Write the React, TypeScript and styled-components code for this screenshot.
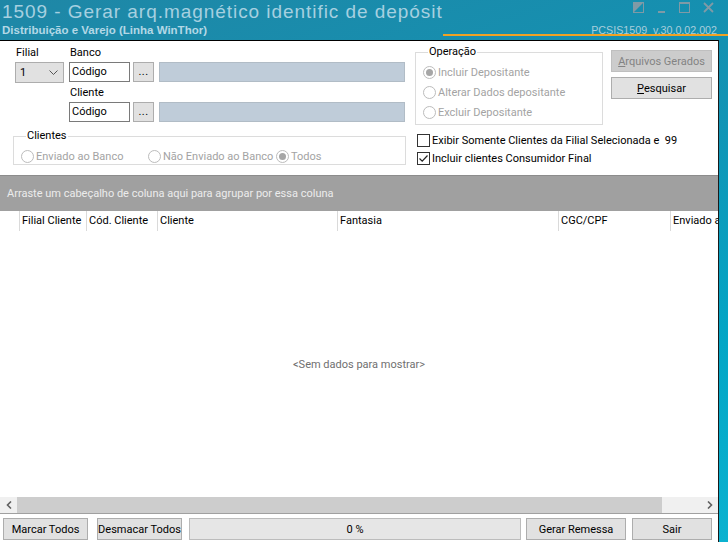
import styled, { createGlobalStyle } from "styled-components";

const GlobalStyle = createGlobalStyle`
  html, body {
    margin: 0;
    padding: 0;
  }
  body {
    font-family: Roboto, "Liberation Sans", sans-serif;
    font-size: 11px;
    color: #000;
  }
`;

const Window = styled.div`
  width: 728px;
  height: 542px;
  display: flex;
  flex-direction: column;
  overflow: hidden;
  background: linear-gradient(160deg, #1f87a6 0%, #1293b4 45%, #03a6c6 75%, #0bb2d0 100%);
`;

const TitleBar = styled.header`
  height: 40px;
  display: flex;
  justify-content: space-between;
  flex-shrink: 0;
  font-family: "Liberation Sans", Arial, sans-serif;
`;

const TitleText = styled.div`
  display: flex;
  flex-direction: column;
  padding: 1px 0 0 2px;
  white-space: nowrap;
`;

const Caption = styled.div`
  font-size: 19px;
  line-height: 22px;
  letter-spacing: 0.95px;
  color: #a6d0e0;
`;

const SubCaption = styled.div`
  font-size: 11.5px;
  line-height: 13px;
  font-weight: bold;
  color: #b3d8e6;
  margin-top: 1px;
`;

const TitleRight = styled.div`
  width: 335px;
  height: 36px;
  border-bottom: 2px solid #f0a224;
  display: flex;
  flex-direction: column;
  align-items: flex-end;
  padding-right: 11px;
  box-sizing: border-box;
`;

const WinButtons = styled.div`
  display: flex;
  gap: 13px;
  margin-top: 2px;
  margin-right: 3px;
  height: 11px;
`;

const Version = styled.div`
  margin-top: 12px;
  font-size: 10.7px;
  line-height: 11px;
  color: #a9cedc;
  white-space: pre;
`;

const Panel = styled.main`
  flex: 1;
  margin-right: 9px;
  background: #fff;
  border-top: 1px solid #000;
  border-right: 1px solid #1a1a1a;
  display: flex;
  flex-direction: column;
  min-height: 0;
`;

const FormArea = styled.section`
  height: 134px;
  display: flex;
  padding: 4px 0 0 13px;
  box-sizing: border-box;
  flex-shrink: 0;
`;

const LeftCol = styled.div`
  width: 393px;
  display: flex;
  flex-direction: column;
`;

const TopFields = styled.div`
  display: flex;
  gap: 5px;
  padding-left: 2px;
`;

const FieldBlock = styled.div<{ $grow?: boolean }>`
  display: flex;
  flex-direction: column;
  flex: ${(p) => (p.$grow ? 1 : "none")};
`;

const Label = styled.div<{ $gap?: number }>`
  line-height: 16px;
  margin-top: ${(p) => p.$gap ?? 0}px;
  margin-bottom: 1px;
  padding-left: 1px;
`;

const Select = styled.div`
  width: 49px;
  height: 21px;
  box-sizing: border-box;
  background: #e1e1e1;
  border: 1px solid #adadad;
  display: flex;
  align-items: center;
  justify-content: space-between;
  padding: 0 5px 0 4px;
`;

const FieldRow = styled.div`
  display: flex;
  gap: 3px;
  height: 20px;
  padding-right: 1px;
`;

const TextInput = styled.div`
  width: 61px;
  box-sizing: border-box;
  border: 1px solid #7a7a7a;
  background: #fff;
  padding-left: 2px;
  line-height: 18px;
`;

const DotsButton = styled.div`
  width: 21px;
  box-sizing: border-box;
  background: #e1e1e1;
  border: 1px solid #adadad;
  text-align: center;
  line-height: 18px;
  letter-spacing: 0.5px;
`;

const ReadOnly = styled.div`
  flex: 1;
  margin-left: 2px;
  background: #bfccd9;
  border: 1px solid #b1bcc6;
`;

const GroupBox = styled.fieldset<{ $width?: number }>`
  margin: 0;
  padding: 0 6px 0 7px;
  border: 1px solid #dcdcdc;
  border-radius: 0;
  min-width: 0;
  width: ${(p) => (p.$width ? `${p.$width}px` : "auto")};
  box-sizing: border-box;
`;

const Legend = styled.legend`
  padding: 0 1px;
  margin-left: 5px;
  line-height: 14px;
  font-size: 11px;
`;

const ClientesBox = styled(GroupBox)`
  margin-top: 7px;
  height: 36px;
  display: flex;
  padding-top: 3px;
`;

const RadioRow = styled.div`
  display: flex;
  align-items: center;
`;

const RadioItem = styled.label<{ $width?: number }>`
  display: flex;
  align-items: center;
  gap: 2px;
  color: #a3a3a3;
  height: 20px;
  white-space: nowrap;
  width: ${(p) => (p.$width ? `${p.$width}px` : "auto")};
`;

const RadioDot = styled.span<{ $checked?: boolean }>`
  width: 13px;
  height: 13px;
  flex-shrink: 0;
  border-radius: 50%;
  border: 1px solid #bcbcbc;
  box-sizing: border-box;
  background: #fff;
  display: flex;
  align-items: center;
  justify-content: center;
  &::after {
    content: "";
    width: 7px;
    height: 7px;
    border-radius: 50%;
    background: ${(p) => (p.$checked ? "#a6a6a6" : "transparent")};
  }
`;

const RightArea = styled.div`
  margin-left: 9px;
  display: flex;
  flex-direction: column;
`;

const OpRow = styled.div`
  display: flex;
  gap: 8px;
`;

const OperacaoBox = styled(GroupBox)`
  height: 80px;
  padding: 3px 6px 0 7px;
  display: flex;
  flex-direction: column;
`;

const ButtonCol = styled.div`
  display: flex;
  flex-direction: column;
  gap: 5px;
  padding-top: 5px;
`;

const Button = styled.button<{ $width: number; $disabled?: boolean }>`
  width: ${(p) => p.$width}px;
  height: 22px;
  flex-shrink: 0;
  box-sizing: border-box;
  padding: 0;
  font: inherit;
  font-size: 11px;
  white-space: nowrap;
  background: ${(p) => (p.$disabled ? "#cccccc" : "#e1e1e1")};
  border: 1px solid ${(p) => (p.$disabled ? "#bfbfbf" : "#adadad")};
  color: ${(p) => (p.$disabled ? "#838383" : "#000")};
  u {
    text-decoration: underline;
  }
`;

const CheckList = styled.div`
  display: flex;
  flex-direction: column;
  gap: 5px;
  margin-top: 9px;
  padding-left: 2px;
`;

const CheckItem = styled.label`
  display: flex;
  align-items: center;
  gap: 2px;
  height: 13px;
  white-space: pre;
`;

const CheckBox = styled.span`
  width: 13px;
  height: 13px;
  box-sizing: border-box;
  border: 1px solid #333;
  background: #fff;
  display: flex;
  align-items: center;
  justify-content: center;
`;

const GroupPanel = styled.div`
  height: 36px;
  flex-shrink: 0;
  background: #a0a0a0;
  border-top: 1px solid #8c8c8c;
  box-sizing: border-box;
  color: #ececec;
  display: flex;
  align-items: center;
  padding-left: 7px;
`;

const HeaderRow = styled.div`
  height: 20px;
  flex-shrink: 0;
  display: flex;
  overflow: hidden;
`;

const HeaderCell = styled.div<{ $width: number }>`
  width: ${(p) => p.$width}px;
  flex-shrink: 0;
  box-sizing: border-box;
  border-right: 1px solid #dadada;
  padding-left: 2px;
  line-height: 20px;
  white-space: nowrap;
  overflow: hidden;
`;

const GridBody = styled.div`
  flex: 1;
  display: flex;
  align-items: center;
  justify-content: center;
  color: #6f6f6f;
`;

const ScrollBar = styled.div`
  height: 17px;
  flex-shrink: 0;
  display: flex;
  background: #f0f0f0;
  border-bottom: 1px solid #a0a0a0;
  box-sizing: border-box;
`;

const ScrollArrow = styled.div`
  width: 17px;
  display: flex;
  align-items: center;
  justify-content: center;
`;

const ScrollThumb = styled.div<{ $width: number }>`
  width: ${(p) => p.$width}px;
  background: #cdcdcd;
`;

const ScrollTrack = styled.div`
  flex: 1;
`;

const Footer = styled.footer`
  height: 28px;
  flex-shrink: 0;
  display: flex;
  align-items: flex-start;
  padding: 4px 0 0 3px;
  box-sizing: border-box;
  gap: 0;
`;

const Progress = styled.div`
  width: 332px;
  height: 22px;
  box-sizing: border-box;
  background: #e6e6e6;
  border: 1px solid #bcbcbc;
  display: flex;
  align-items: center;
  justify-content: center;
  margin: 0 5px 0 7px;
`;

const columns = [
  { title: "", width: 20 },
  { title: "Filial Cliente", width: 67 },
  { title: "Cód. Cliente", width: 71 },
  { title: "Cliente", width: 180 },
  { title: "Fantasia", width: 221 },
  { title: "CGC/CPF", width: 112 },
  { title: "Enviado ao Banco", width: 100 },
];

const iconColor = "#7f9aa6";

function Radio({ label, checked, width }: { label: string; checked?: boolean; width?: number }) {
  return (
    <RadioItem $width={width}>
      <RadioDot $checked={checked} />
      {label}
    </RadioItem>
  );
}

function Check({ label, checked }: { label: string; checked?: boolean }) {
  return (
    <CheckItem>
      <CheckBox>
        {checked && (
          <svg width="11" height="11" viewBox="0 0 11 11">
            <path d="M1.5 5.5 L4.2 8.2 L9.5 2.5" fill="none" stroke="#222" strokeWidth="1.2" />
          </svg>
        )}
      </CheckBox>
      {label}
    </CheckItem>
  );
}

export default function App() {
  return (
    <>
      <GlobalStyle />
      <Window>
        <TitleBar>
          <TitleText>
            <Caption>1509 - Gerar arq.magnético identific de depósit</Caption>
            <SubCaption>Distribuição e Varejo (Linha WinThor)</SubCaption>
          </TitleText>
          <TitleRight>
            <WinButtons>
              <svg width="11" height="11" viewBox="0 0 11 11">
                <rect x="0.5" y="0.5" width="10" height="10" fill="none" stroke={iconColor} />
                <path d="M0 0 H11 L0 11 Z" fill={iconColor} />
              </svg>
              <svg width="9" height="11" viewBox="0 0 9 11">
                <rect x="1" y="9" width="7" height="2" fill={iconColor} />
              </svg>
              <svg width="11" height="11" viewBox="0 0 11 11">
                <rect x="0.5" y="0.5" width="10" height="10" fill="none" stroke={iconColor} />
                <rect x="0" y="0" width="11" height="2" fill={iconColor} />
              </svg>
              <svg width="11" height="11" viewBox="0 0 11 11">
                <path d="M1 1 L10 10 M10 1 L1 10" stroke={iconColor} strokeWidth="1.8" />
              </svg>
            </WinButtons>
            <Version>PCSIS1509  v.30.0.02.002</Version>
          </TitleRight>
        </TitleBar>

        <Panel>
          <FormArea>
            <LeftCol>
              <TopFields>
                <FieldBlock>
                  <Label>Filial</Label>
                  <Select>
                    <span>1</span>
                    <svg width="9" height="6" viewBox="0 0 9 6">
                      <path d="M0.5 0.5 L4.5 4.5 L8.5 0.5" fill="none" stroke="#555" />
                    </svg>
                  </Select>
                </FieldBlock>
                <FieldBlock $grow>
                  <Label>Banco</Label>
                  <FieldRow>
                    <TextInput>Código</TextInput>
                    <DotsButton>...</DotsButton>
                    <ReadOnly />
                  </FieldRow>
                  <Label $gap={3}>Cliente</Label>
                  <FieldRow>
                    <TextInput>Código</TextInput>
                    <DotsButton>...</DotsButton>
                    <ReadOnly />
                  </FieldRow>
                </FieldBlock>
              </TopFields>
              <ClientesBox>
                <Legend>Clientes</Legend>
                <RadioRow>
                  <Radio label="Enviado ao Banco" width={127} />
                  <Radio label="Não Enviado ao Banco" width={128} />
                  <Radio label="Todos" checked />
                </RadioRow>
              </ClientesBox>
            </LeftCol>

            <RightArea>
              <OpRow>
                <OperacaoBox $width={188}>
                  <Legend>Operação</Legend>
                  <Radio label="Incluir Depositante" checked />
                  <Radio label="Alterar Dados depositante" />
                  <Radio label="Excluir Depositante" />
                </OperacaoBox>
                <ButtonCol>
                  <Button $width={101} $disabled>
                    <u>A</u>rquivos Gerados
                  </Button>
                  <Button $width={101}>
                    <u>P</u>esquisar
                  </Button>
                </ButtonCol>
              </OpRow>
              <CheckList>
                <Check label="Exibir Somente Clientes da Filial Selecionada e  99" />
                <Check label="Incluir clientes Consumidor Final" checked />
              </CheckList>
            </RightArea>
          </FormArea>

          <GroupPanel>Arraste um cabeçalho de coluna aqui para agrupar por essa coluna</GroupPanel>

          <HeaderRow>
            {columns.map((c, i) => (
              <HeaderCell key={i} $width={c.width}>
                {c.title}
              </HeaderCell>
            ))}
          </HeaderRow>

          <GridBody>&lt;Sem dados para mostrar&gt;</GridBody>

          <ScrollBar>
            <ScrollArrow>
              <svg width="6" height="8" viewBox="0 0 6 8">
                <path d="M5 0.5 L1.5 4 L5 7.5" fill="none" stroke="#606060" strokeWidth="1.6" />
              </svg>
            </ScrollArrow>
            <ScrollThumb $width={645} />
            <ScrollTrack />
            <ScrollArrow>
              <svg width="6" height="8" viewBox="0 0 6 8">
                <path d="M1 0.5 L4.5 4 L1 7.5" fill="none" stroke="#606060" strokeWidth="1.6" />
              </svg>
            </ScrollArrow>
          </ScrollBar>

          <Footer>
            <Button $width={85}>Marcar Todos</Button>
            <Button $width={85} style={{ marginLeft: 9 }}>
              Desmacar Todos
            </Button>
            <Progress>0 %</Progress>
            <Button $width={100}>Gerar Remessa</Button>
            <Button $width={80} style={{ marginLeft: 6 }}>
              Sair
            </Button>
          </Footer>
        </Panel>
      </Window>
    </>
  );
}
